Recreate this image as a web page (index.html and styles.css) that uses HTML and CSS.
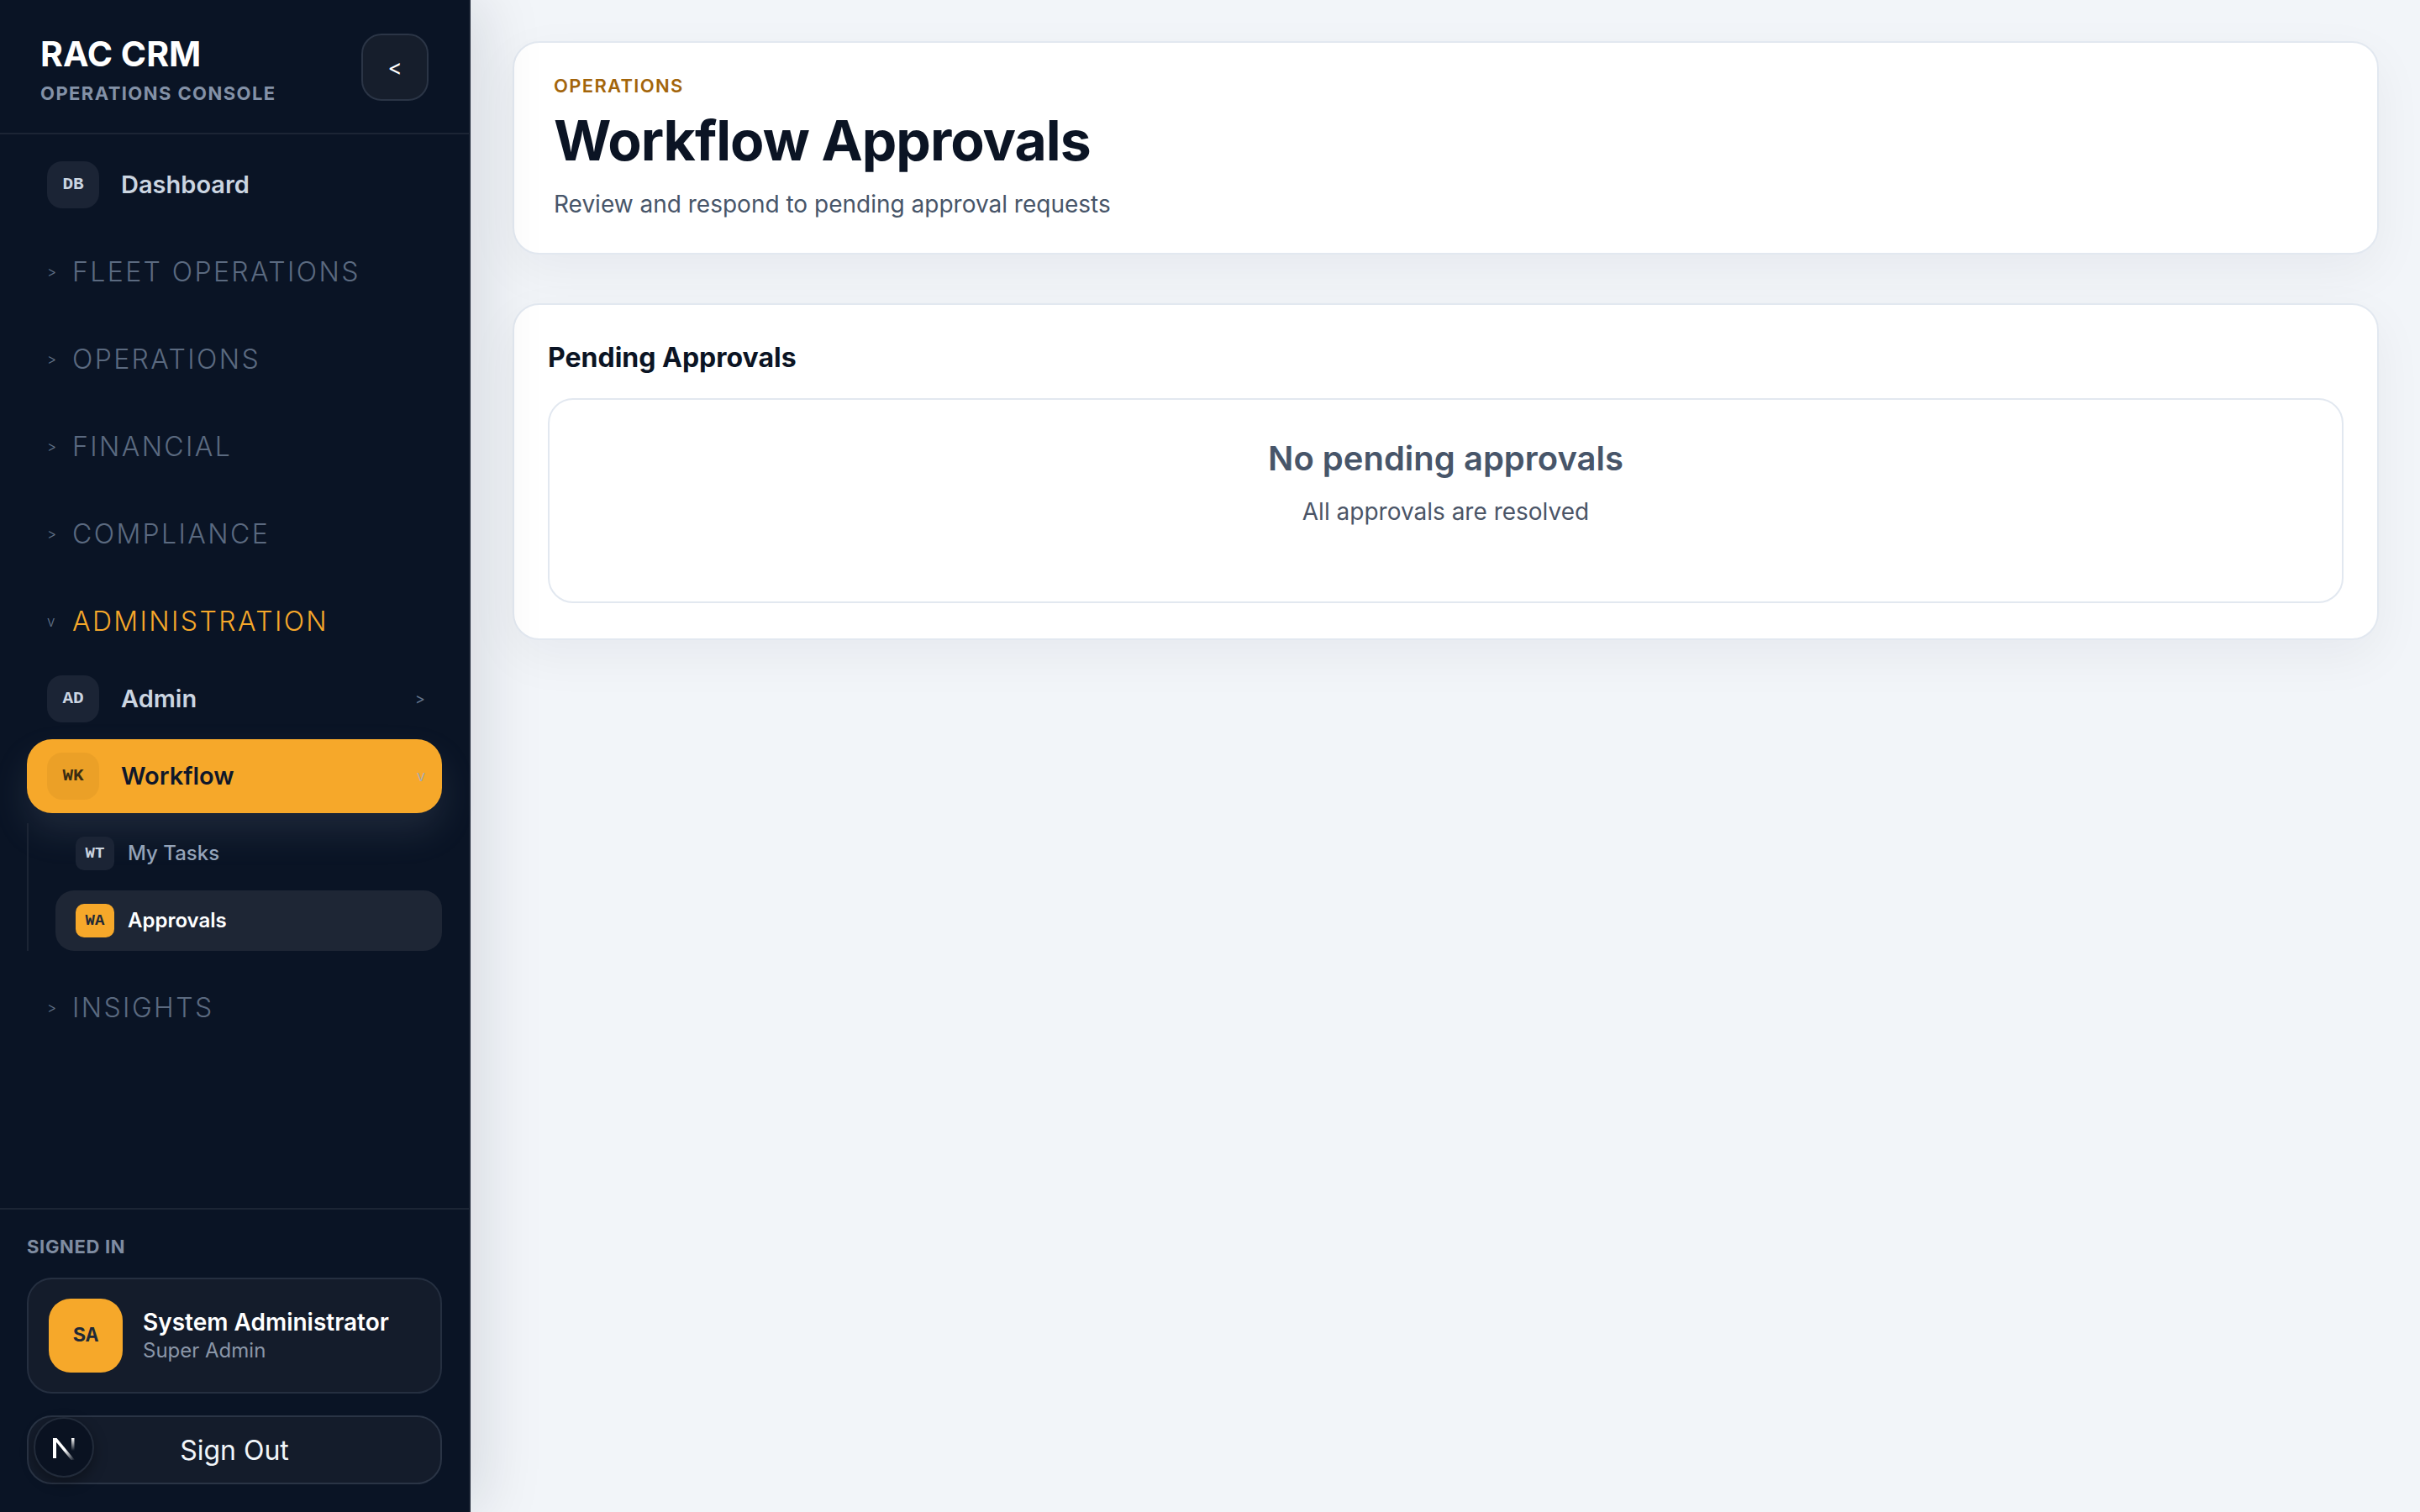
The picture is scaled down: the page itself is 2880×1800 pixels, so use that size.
FILE: index.html
```html
<!DOCTYPE html>
<html lang="en">

<head>
    <meta charset="UTF-8">
    <meta name="viewport" content="width=device-width, initial-scale=1.0">
    <title>Workflow Approvals - RAC CRM</title>
    <link rel="stylesheet" href="styles.css">
</head>

<body>

    <!-- Sidebar -->
    <aside class="sidebar">
        <header class="brand">
            <div>
                <div class="brand-title">RAC CRM</div>
                <div class="brand-sub">OPERATIONS CONSOLE</div>
            </div>
            <button class="collapse-btn">&lt;</button>
        </header>

        <nav class="nav">
            <a class="nav-item" href="#"><span class="badge">DB</span>Dashboard</a>

            <div class="section-toggle"><span class="caret">&gt;</span>FLEET OPERATIONS</div>
            <div class="section-toggle"><span class="caret">&gt;</span>OPERATIONS</div>
            <div class="section-toggle"><span class="caret">&gt;</span>FINANCIAL</div>
            <div class="section-toggle"><span class="caret">&gt;</span>COMPLIANCE</div>
            <div class="section-toggle open"><span class="caret">v</span>ADMINISTRATION</div>

            <div class="section-body">
                <a class="nav-item" href="#"><span class="badge">AD</span>Admin<span class="chev">&gt;</span></a>
                <a class="nav-item active" href="#"><span class="badge">WK</span>Workflow<span class="chev">v</span></a>

                <div class="subnav">
                    <a class="sub-item" href="#"><span class="badge">WT</span>My Tasks</a>
                    <a class="sub-item current" href="#"><span class="badge">WA</span>Approvals</a>
                </div>
            </div>

            <div class="section-toggle"><span class="caret">&gt;</span>INSIGHTS</div>
        </nav>

        <!-- Usuario -->
        <div class="account">
            <div class="account-label">SIGNED IN</div>
            <div class="user-card">
                <div class="avatar">SA</div>
                <div>
                    <div class="user-name">System Administrator</div>
                    <div class="user-role">Super Admin</div>
                </div>
            </div>
            <button class="signout">Sign Out</button>
        </div>
    </aside>

    <!-- Contenido -->
    <main class="main">
        <section class="card page-head">
            <div class="eyebrow">OPERATIONS</div>
            <h1 class="page-title">Workflow Approvals</h1>
            <p class="page-sub">Review and respond to pending approval requests</p>
        </section>

        <section class="card panel">
            <h2 class="panel-title">Pending Approvals</h2>
            <div class="empty">
                <div class="empty-title">No pending approvals</div>
                <div class="empty-text">All approvals are resolved</div>
            </div>
        </section>
    </main>

    <!-- Indicador de desarrollo -->
    <div class="dev-badge">
        <svg width="68" height="68" viewBox="0 0 68 68">
            <defs>
                <linearGradient id="diag" x1="0" y1="0" x2="1" y2="1">
                    <stop offset="0.55" stop-color="#fff" />
                    <stop offset="1" stop-color="#fff" stop-opacity="0" />
                </linearGradient>
                <linearGradient id="bar" x1="0" y1="0" x2="0" y2="1">
                    <stop offset="0" stop-color="#fff" />
                    <stop offset="1" stop-color="#fff" stop-opacity="0" />
                </linearGradient>
            </defs>
            <rect x="21" y="23" width="4" height="24" fill="#fff" />
            <polygon points="21,23 25.5,23 47,49 42.5,49" fill="url(#diag)" />
            <rect x="43" y="23" width="3.5" height="15" fill="url(#bar)" />
        </svg>
    </div>

</body>

</html>
```

FILE: styles.css
```css
/* Reset */
* {
    margin: 0;
    padding: 0;
    box-sizing: border-box;
}

html,
body {
    height: 100%;
}

body {
    display: flex;
    font-family: "Inter", "Liberation Sans", sans-serif;
    background-color: #f2f5f9;
    overflow: hidden;
}

a {
    text-decoration: none;
    color: inherit;
}

button {
    font-family: inherit;
    cursor: pointer;
}

/* Sidebar */
.sidebar {
    width: 560px;
    flex-shrink: 0;
    height: 100vh;
    background-color: #0a1425;
    border-right: 2px solid #1a2333;
    display: flex;
    flex-direction: column;
    box-shadow: 12px 0 70px rgba(15, 23, 42, 0.13);
    position: relative;
    z-index: 2;
}

.brand {
    display: flex;
    justify-content: space-between;
    align-items: flex-start;
    padding: 40px 48px 32px;
    border-bottom: 2px solid #1c2535;
}

.brand-title {
    font-size: 41px;
    font-weight: 700;
    line-height: 1.2;
    color: #fff;
}

.brand-sub {
    margin-top: 8px;
    font-size: 22px;
    font-weight: 700;
    line-height: 1.3;
    color: #8391a7;
    letter-spacing: 0.065em;
}

.collapse-btn {
    width: 80px;
    height: 80px;
    border-radius: 24px;
    background-color: #161e2c;
    border: 2px solid #2b3546;
    color: #fff;
    font-size: 26px;
    display: flex;
    align-items: center;
    justify-content: center;
}

.nav {
    flex: 1;
    padding: 16px 32px 0;
}

.nav-item {
    display: flex;
    align-items: center;
    gap: 26px;
    height: 88px;
    padding: 0 20px 0 24px;
    border-radius: 30px;
    color: #cbd5e1;
    font-size: 29px;
    font-weight: 600;
}

.nav-item+.nav-item {
    margin-top: 4px;
}

.badge {
    width: 62px;
    height: 56px;
    flex-shrink: 0;
    border-radius: 18px;
    background-color: #1b2435;
    display: flex;
    align-items: center;
    justify-content: center;
    font-family: "Liberation Mono", monospace;
    font-weight: 700;
    font-size: 21px;
    color: #cbd5e1;
}

.chev {
    margin-left: auto;
    font-size: 18px;
    font-weight: 400;
    color: #64748b;
}

.nav-item.active {
    background-color: #f6a82a;
    color: #0f172a;
    box-shadow: 0 22px 44px rgba(148, 163, 184, 0.14);
}

.nav-item.active .badge {
    background-color: rgba(120, 80, 10, 0.08);
    color: #3a2c12;
}

.nav-item.active .chev {
    color: #a7abb2;
}

/* Secciones */
.section-toggle {
    display: flex;
    align-items: center;
    height: 88px;
    margin-top: 16px;
    padding-left: 24px;
    font-size: 32px;
    font-weight: 300;
    letter-spacing: 0.075em;
    color: #5b6a80;
}

.caret {
    width: 30px;
    flex-shrink: 0;
    font-size: 17px;
    letter-spacing: 0;
    color: #64748b;
}

.section-toggle.open {
    color: #f6a82a;
}

.section-body {
    margin-top: 4px;
}

/* el margen inferior se junta con el margin-top del siguiente bloque */
.subnav {
    margin: 12px 0 24px;
    border-left: 2px solid #1c2535;
    padding-left: 32px;
    display: flex;
    flex-direction: column;
    gap: 8px;
}

.sub-item {
    display: flex;
    align-items: center;
    gap: 16px;
    height: 72px;
    padding: 0 24px;
    border-radius: 22px;
    font-size: 24px;
    font-weight: 500;
    color: #94a3b8;
}

.sub-item .badge {
    width: 46px;
    height: 40px;
    border-radius: 10px;
    font-size: 19px;
}

.sub-item.current {
    background-color: #1e2635;
    color: #fff;
    font-weight: 600;
}

.sub-item.current .badge {
    background-color: #f6a82a;
    color: #1f2937;
}

/* Usuario */
.account {
    border-top: 2px solid #1c2535;
    padding: 30px 32px 33px;
}

.account-label {
    font-size: 22px;
    font-weight: 700;
    line-height: 1.3;
    color: #7f8ca1;
    letter-spacing: 0.03em;
}

.user-card {
    margin-top: 22px;
    display: flex;
    align-items: center;
    gap: 24px;
    padding: 23px 24px;
    background-color: #141c2b;
    border: 2px solid #252f40;
    border-radius: 30px;
}

.avatar {
    width: 88px;
    height: 88px;
    flex-shrink: 0;
    border-radius: 26px;
    background-color: #f6a82a;
    display: flex;
    align-items: center;
    justify-content: center;
    font-family: "Liberation Mono", monospace;
    font-weight: 700;
    font-size: 25px;
    color: #1f2937;
}

.user-name {
    font-size: 28px;
    font-weight: 600;
    line-height: 1.25;
    color: #fff;
}

.user-role {
    font-size: 24px;
    line-height: 1.3;
    color: #8a96a8;
}

.signout {
    margin-top: 26px;
    width: 100%;
    height: 82px;
    border-radius: 30px;
    background-color: #141c2b;
    border: 2px solid #2a3445;
    color: #f1f5f9;
    font-size: 32px;
}

/* Contenido */
.main {
    flex: 1;
    padding: 49px 49px 48px 50px;
    display: flex;
    flex-direction: column;
    gap: 58px;
}

.card {
    background-color: #fff;
    border: 2px solid #e2e8f0;
    border-radius: 32px;
    box-shadow: 0 20px 60px rgba(15, 23, 42, 0.05);
}

.page-head {
    padding: 36px 47px 37px;
}

.eyebrow {
    font-size: 22px;
    font-weight: 600;
    line-height: 1.4;
    letter-spacing: 0.06em;
    color: #a3650b;
}

.page-title {
    margin-top: 12px;
    font-size: 66px;
    font-weight: 700;
    line-height: 1.15;
    letter-spacing: -0.015em;
    color: #0b1424;
}

.page-sub {
    margin-top: 16px;
    font-size: 28px;
    line-height: 1.5;
    color: #475569;
}

.panel {
    padding: 41px 40px 42px;
}

.panel-title {
    font-size: 32px;
    font-weight: 700;
    line-height: 1.4;
    color: #0b1424;
}

.empty {
    margin-top: 26px;
    border: 2px solid #e2e8f0;
    border-radius: 30px;
    padding: 44px 40px 86px;
    text-align: center;
}

.empty-title {
    font-size: 40px;
    font-weight: 600;
    line-height: 1.3;
    color: #475569;
}

.empty-text {
    margin-top: 16px;
    font-size: 28px;
    line-height: 1.5;
    color: #4b5567;
}

/* Indicador de desarrollo */
.dev-badge {
    position: fixed;
    left: 40px;
    bottom: 41px;
    width: 72px;
    height: 72px;
    border-radius: 50%;
    background-color: #0a1221;
    border: 2px solid #222b3a;
    box-shadow: 0 6px 16px rgba(0, 0, 0, 0.35);
    z-index: 10;
}
```
